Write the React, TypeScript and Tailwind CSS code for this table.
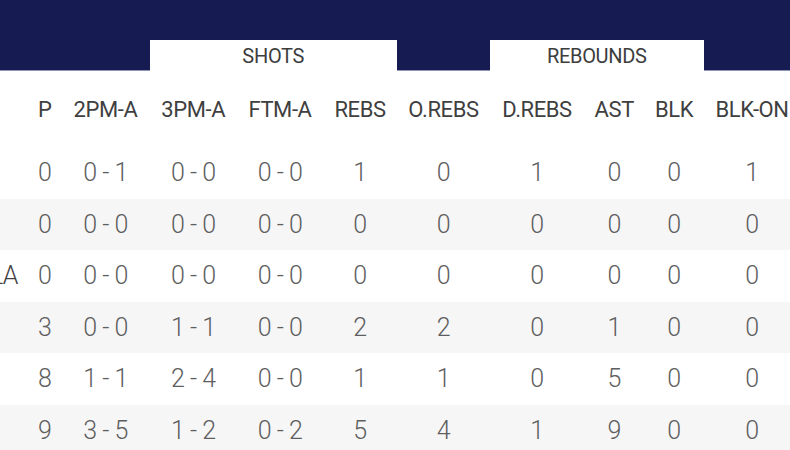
import React from "react";

const cols =
  "grid grid-cols-[28px_33.5px_88px_87.5px_86px_74px_93px_94px_60.5px_59px_97px]";

const headers = ["P", "2PM-A", "3PM-A", "FTM-A", "REBS", "O.REBS", "D.REBS", "AST", "BLK", "BLK-ON"];

const rows: { name: string; v: string[] }[] = [
  { name: "", v: ["0", "0 - 1", "0 - 0", "0 - 0", "1", "0", "1", "0", "0", "1"] },
  { name: "", v: ["0", "0 - 0", "0 - 0", "0 - 0", "0", "0", "0", "0", "0", "0"] },
  { name: "MARCELO ZAVALA", v: ["0", "0 - 0", "0 - 0", "0 - 0", "0", "0", "0", "0", "0", "0"] },
  { name: "", v: ["3", "0 - 0", "1 - 1", "0 - 0", "2", "2", "0", "1", "0", "0"] },
  { name: "", v: ["8", "1 - 1", "2 - 4", "0 - 0", "1", "1", "0", "5", "0", "0"] },
  { name: "", v: ["9", "3 - 5", "1 - 2", "0 - 2", "5", "4", "1", "9", "0", "0"] },
];

export default function App() {
  return (
    <div
      className="w-[790px] h-[450px] overflow-hidden bg-white"
      style={{ fontFamily: "Roboto, 'Open Sans', sans-serif" }}
    >
      <div className="w-[800px]">
        {/* Navy band */}
        <div className="h-[40px] bg-[#161c52]" />
        <div className={`${cols} h-[31px]`}>
          <div className="col-span-3 bg-[#161c52] border-b border-[#8e94b6]" />
          <div className="col-span-3 bg-white flex items-center justify-center text-[20px] tracking-[-0.3px] text-[#3d3d3d]">
            SHOTS
          </div>
          <div className="col-span-1 bg-[#161c52] border-b border-[#8e94b6]" />
          <div className="col-span-3 bg-white flex items-center justify-center text-[20px] tracking-[-0.3px] text-[#3d3d3d]">
            REBOUNDS
          </div>
          <div className="col-span-1 bg-[#161c52] border-b border-[#8e94b6]" />
        </div>

        {/* Header row */}
        <div className={`${cols} h-[76px] items-center text-[22px] tracking-[-0.4px] text-[#3f3f3f]`}>
          <div />
          {headers.map((h) => (
            <div key={h} className="text-center whitespace-nowrap">
              {h}
            </div>
          ))}
        </div>

        {/* Data rows */}
        {rows.map((r, i) => (
          <div
            key={i}
            className={`${cols} h-[51.5px] items-center text-[25px] tracking-[-0.5px] font-light text-[#5e5e5e] ${
              i % 2 === 1 ? "bg-[#f7f6f7]" : "bg-white"
            }`}
          >
            <div className="overflow-hidden flex justify-end pr-[10px] whitespace-nowrap text-[#3f3f3f]">
              <span>{r.name}</span>
            </div>
            {r.v.map((v, j) => (
              <div key={j} className="text-center whitespace-nowrap">
                {v}
              </div>
            ))}
          </div>
        ))}
      </div>
    </div>
  );
}
